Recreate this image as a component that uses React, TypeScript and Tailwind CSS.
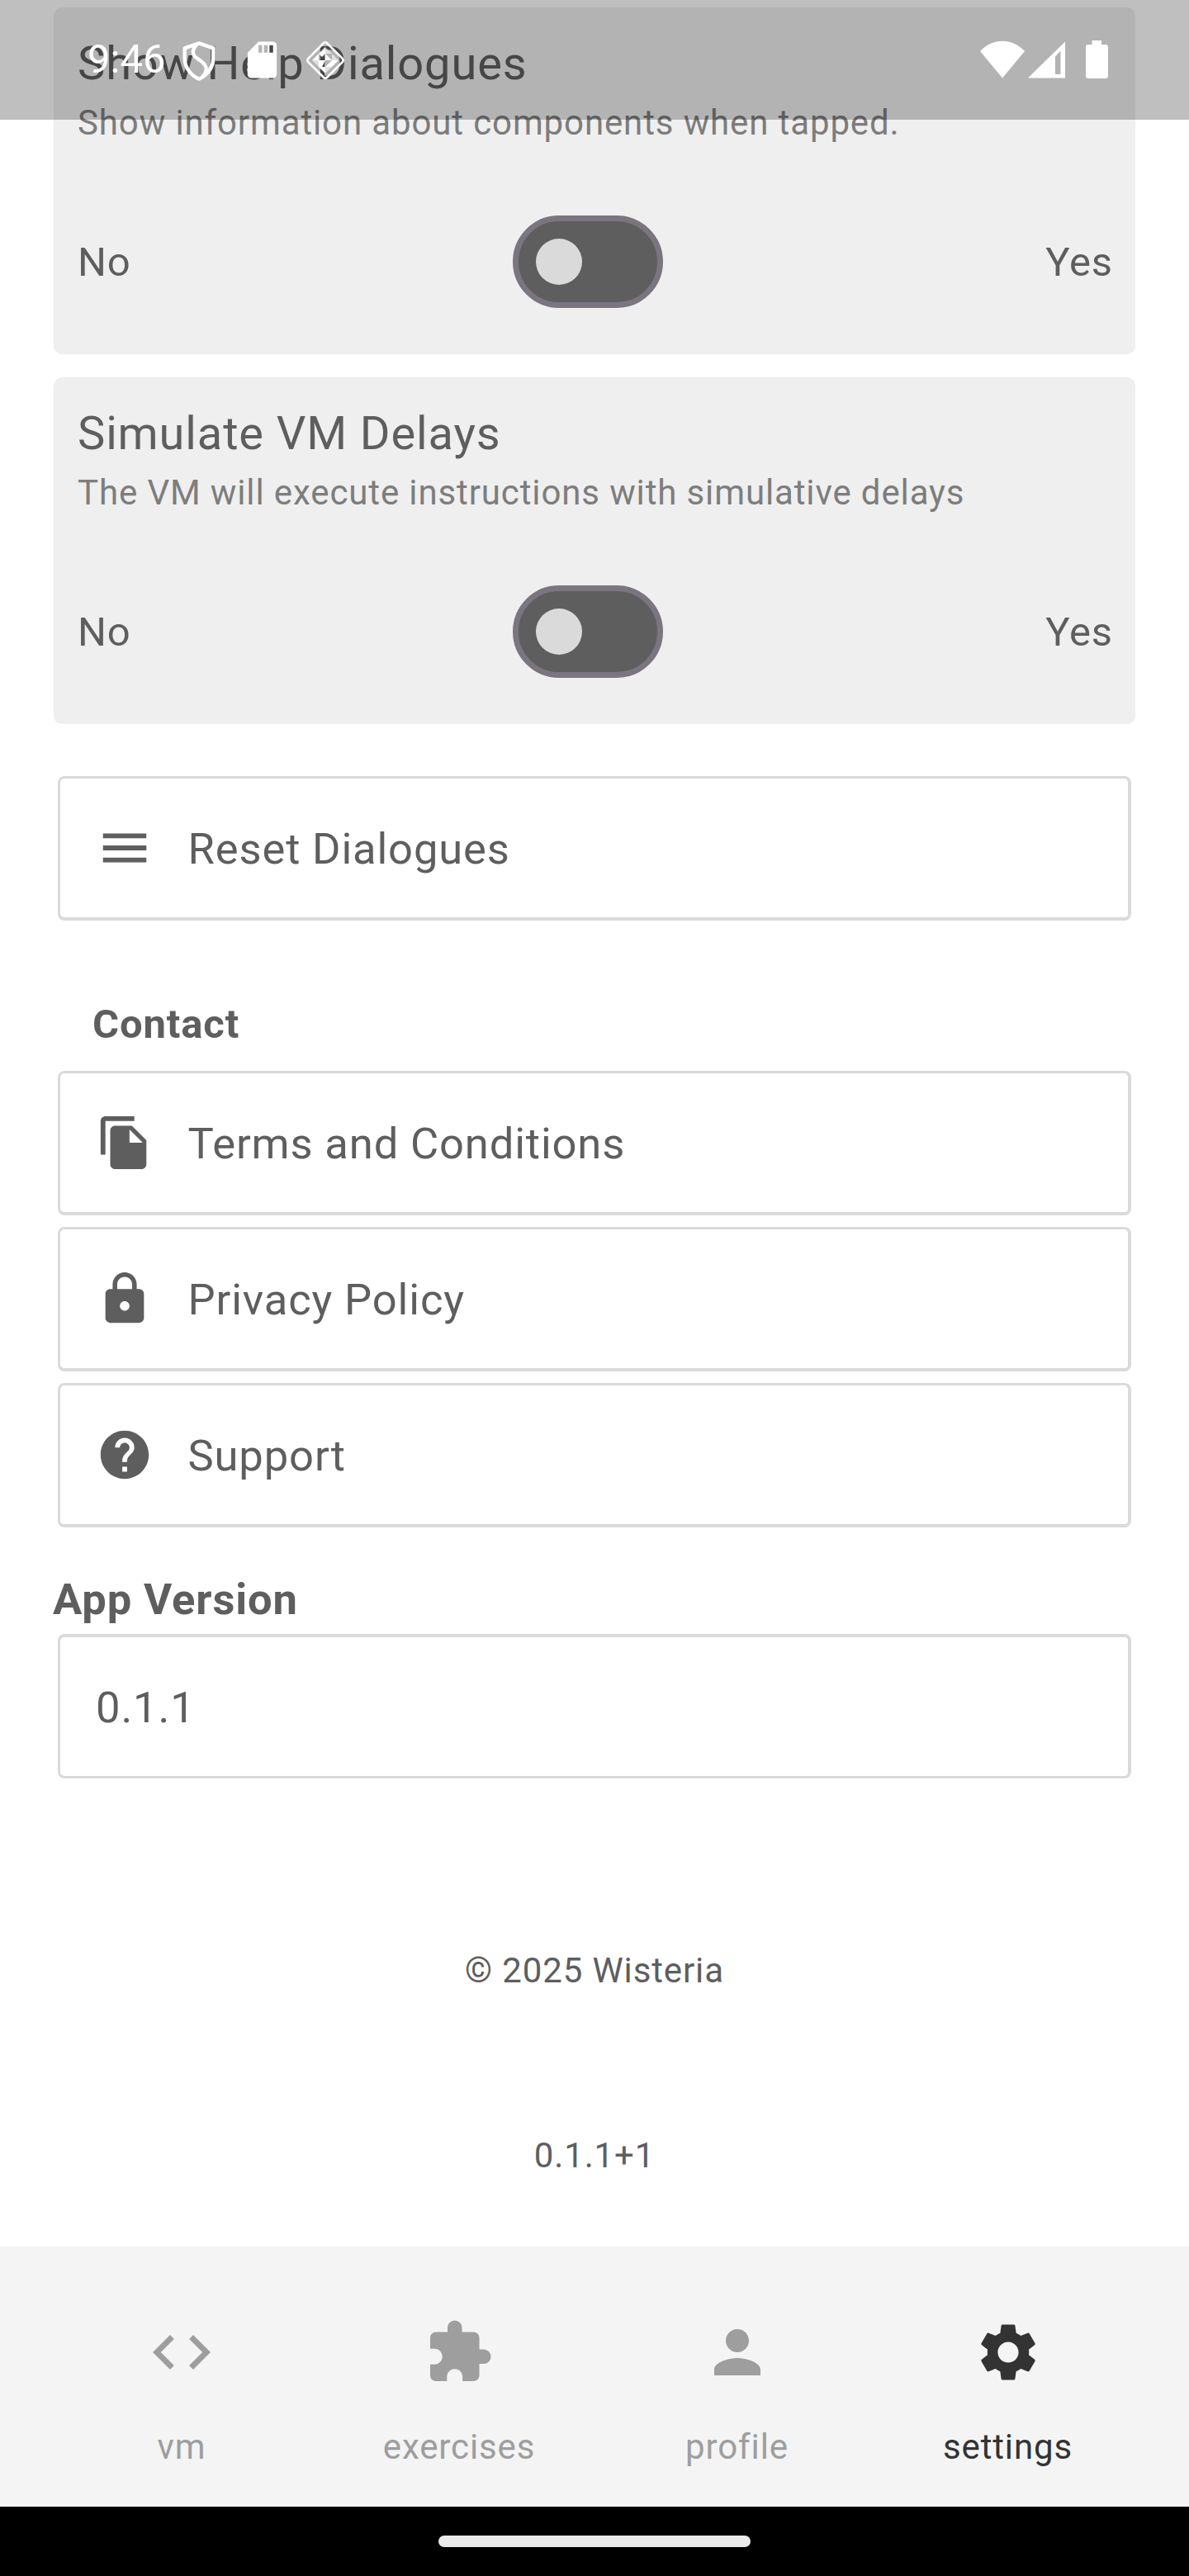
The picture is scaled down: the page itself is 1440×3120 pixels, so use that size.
import type { ReactNode } from "react";
import type { IconType } from "react-icons";
import {
  MdCode,
  MdExtension,
  MdFileCopy,
  MdHelp,
  MdLock,
  MdMenu,
  MdPerson,
  MdSdCard,
  MdSettings,
} from "react-icons/md";

function ShieldIcon() {
  return (
    <svg className="h-[48px] w-[40px]" viewBox="0 0 120 144" fill="none" stroke="white">
      <path
        d="M60 7 L112 25 V62 C112 97 88 125 60 137 C32 125 8 97 8 62 V25 Z"
        strokeWidth="13"
        strokeLinejoin="round"
      />
      <path d="M52 12 C32 34 34 50 56 64 C92 86 94 104 72 130" strokeWidth="13" />
    </svg>
  );
}

function DiamondIcon() {
  return (
    <svg className="h-[50px] w-[50px]" viewBox="0 0 150 150" fill="white">
      <rect
        x="26.5"
        y="26.5"
        width="97"
        height="97"
        rx="9"
        transform="rotate(45 75 75)"
        fill="none"
        stroke="white"
        strokeWidth="8"
      />
      <path d="M51 51 L75 27 V51 Z M27 75 L51 51 V75 Z M51 51 H75 L63 63 Z M75 51 L99 75 H75 Z M51 75 H75 L63 99 H51 Z M75 99 L99 75 V99 Z M51 99 H75 V123 Z M99 75 H123 L99 99 Z" />
      <path d="M75 27 L99 51 H75 Z M99 51 L123 75 H99 Z M27 75 H51 V99 Z M75 99 H99 L75 123 Z" opacity="0.6" />
    </svg>
  );
}

function StatusBar() {
  return (
    <header className="absolute inset-x-0 top-0 flex h-[145px] items-start justify-between bg-black/25 text-white">
      <div className="flex">
        <span className="ml-[106px] mt-[43px] w-[115px] text-[49px] leading-[58px]">9:46</span>
        <span className="mt-[50px]">
          <ShieldIcon />
        </span>
        <MdSdCard className="ml-[30px] mt-[46px] h-[53px] w-[53px]" />
        <span className="ml-[25px] mt-[48px]">
          <DiamondIcon />
        </span>
      </div>
      <div className="mr-[98px] mt-[49px] flex">
        <svg className="h-[46px] w-[54px]" viewBox="0 0 54 46" fill="white">
          <path d="M0 13 C15 -3.5 39 -3.5 54 13 L27 45.5 Z" />
        </svg>
        <svg className="ml-[4px] h-[46px] w-[45px]" viewBox="0 0 45 46" fill="white">
          <path fillRule="evenodd" d="M45 1.5 V45.5 H0 Z M39.5 12.5 L33 19.5 V41 H39.5 Z" />
        </svg>
        <svg className="ml-[25px] h-[46px] w-[27px]" viewBox="0 0 27 46" fill="white">
          <path d="M7.5 0 H19 V5 H24 Q27 5 27 8 V43 Q27 46 24 46 H3 Q0 46 0 43 V8 Q0 5 3 5 H7.5 Z" />
        </svg>
      </div>
    </header>
  );
}

function ToggleCard({ title, description }: { title: string; description: string }) {
  return (
    <section className="h-[420px] rounded-[10px] bg-[#efefef] pl-[29px] pr-[27px] pt-[35px]">
      <h2 className="text-[56px] leading-[66px]">{title}</h2>
      <p className="mt-[14px] text-[42px] leading-[50px] text-[#7d7d7d]">{description}</p>
      <div className="mt-[87px] flex items-center justify-between text-[49px] leading-[58px]">
        <span className="pt-[2px]">No</span>
        <button
          type="button"
          role="switch"
          aria-checked="false"
          className="flex h-[112px] w-[182px] items-center rounded-full border-[7px] border-[#7a757f] bg-[#5e5e5e] pl-[21px]"
        >
          <span className="size-[56px] rounded-full bg-[#dadada]" />
        </button>
        <span className="pt-[2px]">Yes</span>
      </div>
    </section>
  );
}

function OutlinedRow({ children, className = "" }: { children: ReactNode; className?: string }) {
  return (
    <div
      className={`mx-[5px] flex h-[175px] items-center rounded-[8px] border-[3px] border-r-[4px] border-[#dadada] text-[52.5px] leading-[62px] ${className}`}
    >
      {children}
    </div>
  );
}

function LinkRow({ icon: Icon, label }: { icon: IconType; label: string }) {
  return (
    <OutlinedRow className="border-b-[4px] pl-[42.5px]">
      <Icon className="size-[70px]" />
      <span className="ml-[42px] pt-[2px]">{label}</span>
    </OutlinedRow>
  );
}

function NavItem({
  icon: Icon,
  label,
  className,
}: {
  icon: IconType;
  label: string;
  className: string;
}) {
  return (
    <a className={`flex flex-col items-center ${className}`}>
      <Icon className="size-[84px]" />
      <span className="mt-[48px] text-[42px] leading-[50px]">{label}</span>
    </a>
  );
}

export default function App() {
  return (
    <div className="relative flex h-[3120px] w-[1440px] flex-col overflow-hidden bg-white font-['Roboto',sans-serif] text-[#5e5e5e]">
      <main className="flex h-[2721px] flex-col px-[65px] pt-[9px] tracking-[0.875px]">
        <div className="flex flex-col gap-[28px]">
          <ToggleCard
            title="Show Help Dialogues"
            description="Show information about components when tapped."
          />
          <ToggleCard
            title="Simulate VM Delays"
            description="The VM will execute instructions with simulative delays"
          />
        </div>

        <div className="mt-[63px]">
          <LinkRow icon={MdMenu} label="Reset Dialogues" />
        </div>

        <h3 className="ml-[47px] mt-[97px] text-[49px] font-bold leading-[58px]">Contact</h3>
        <div className="mt-[27px] flex flex-col gap-[14px]">
          <LinkRow icon={MdFileCopy} label="Terms and Conditions" />
          <LinkRow icon={MdLock} label="Privacy Policy" />
          <LinkRow icon={MdHelp} label="Support" />
        </div>

        <h3 className="-ml-px mt-[56px] text-[52.5px] font-bold leading-[62px]">App Version</h3>
        <div className="mt-[11px]">
          <OutlinedRow className="border-t-[4px] pl-[43px]">
            <span className="pt-px">0.1.1</span>
          </OutlinedRow>
        </div>

        <footer className="mt-[208px] flex flex-col items-center gap-[174px] text-[42px] leading-[50px]">
          <p>© 2025 Wisteria</p>
          <p>0.1.1+1</p>
        </footer>
      </main>

      <nav className="flex h-[315px] bg-[#f4f4f4] pl-[160px] pt-[86px] tracking-[0.875px] text-[#9e9e9e]">
        <NavItem icon={MdCode} label="vm" className="w-[120px]" />
        <NavItem icon={MdExtension} label="exercises" className="ml-[176px] w-[200px]" />
        <NavItem icon={MdPerson} label="profile" className="ml-[166px] w-[141px]" />
        <NavItem icon={MdSettings} label="settings" className="ml-[172px] w-[171px] text-[#333333]" />
      </nav>

      <div className="flex h-[84px] items-center justify-center bg-black">
        <div className="h-[14px] w-[378px] rounded-full bg-[#ebebeb]" />
      </div>

      <StatusBar />
    </div>
  );
}
